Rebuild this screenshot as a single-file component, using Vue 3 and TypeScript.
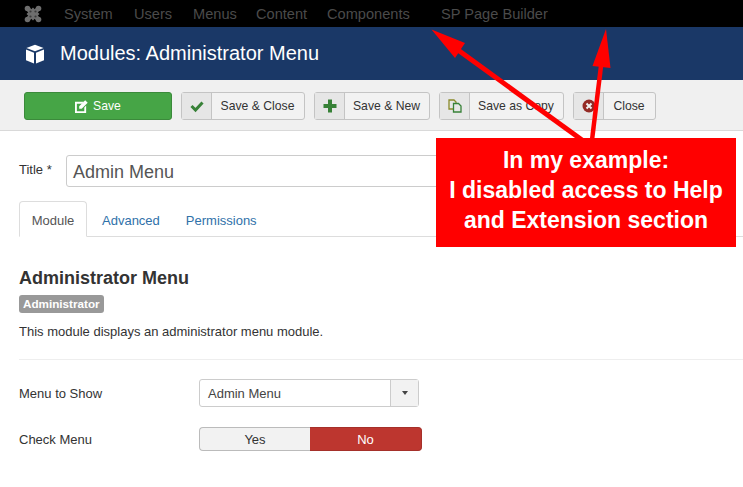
<template>
  <div class="page">
    <nav class="topnav">
      <svg class="joomla" viewBox="0 0 18 18" width="18" height="18">
        <g fill="#6e6e6e">
          <circle cx="3.500" cy="3.500" r="2.800" />
          <circle cx="14.500" cy="3.500" r="2.800" />
          <circle cx="3.500" cy="14.500" r="2.800" />
          <circle cx="14.500" cy="14.500" r="2.800" />
          <path d="M9 2.500 15.500 9 9 15.500 2.500 9Z" />
        </g>
        <path fill="none" stroke="#6e6e6e" stroke-width="4.500" d="M3.500 3.500 14.500 14.500M14.500 3.500 3.500 14.500" />
        <g fill="#3a3a3a">
          <circle cx="6.500" cy="6.500" r="1.100" />
          <circle cx="11.500" cy="6.500" r="1.100" />
          <circle cx="6.500" cy="11.500" r="1.100" />
          <circle cx="11.500" cy="11.500" r="1.100" />
        </g>
      </svg>
      <a v-for="item in menu" :key="item.label" class="navlink" :style="{ width: item.width + 'px' }">{{ item.label }}</a>
    </nav>

    <header class="titlebar">
      <svg class="cube" viewBox="0 0 20 20" width="20" height="20">
        <path fill="#fff" d="M10 .8 18.600 4 10 7.300 1.400 4Z" />
        <path fill="#fff" d="M1 5.600 9 8.700V19.400L1 16.300Z" />
        <path fill="#fff" d="M19 5.600 11 8.700V19.400L19 16.300Z" />
      </svg>
      <h1>Modules: Administrator Menu</h1>
    </header>

    <div class="toolbar">
      <button class="btn-save">
        <svg viewBox="0 0 14 14" width="13" height="13">
          <path fill="#fff" d="M0 2h9.500L7.500 4H2v8h8V8l2-2v8H0Z" />
          <path fill="#fff" d="M4.500 6.800 11 .3l2.700 2.700-6.500 6.500H4.500Z" />
        </svg>
        Save
      </button>
      <button v-for="b in buttons" :key="b.label" class="btn" :style="{ width: b.width + 'px' }">
        <span class="btn-icon">
          <svg v-if="b.icon === 'check'" viewBox="0 0 14 14" width="14" height="14">
            <path fill="none" stroke="#378137" stroke-width="3" d="M1.500 7 5.500 11 12.500 3.500" />
          </svg>
          <svg v-else-if="b.icon === 'plus'" viewBox="0 0 14 14" width="14" height="14">
            <path fill="#378137" d="M5 .5h4V5h4.500v4H9v4.500H5V9H.5V5H5Z" />
          </svg>
          <svg v-else-if="b.icon === 'copy'" viewBox="0 0 14 14" width="14" height="14">
            <path fill="none" stroke="#8a8a2a" stroke-width="1.300" d="M1 1h5l2 2v7H1Z" />
            <path fill="#e6e6e6" stroke="#378137" stroke-width="1.300" d="M5.500 4.500h5l2.500 2.500v6H5.500Z" />
          </svg>
          <svg v-else viewBox="0 0 14 14" width="14" height="14">
            <circle cx="7" cy="7" r="6.500" fill="#942a25" />
            <path stroke="#f0f0f0" stroke-width="2" d="M4.500 4.500 9.500 9.500M9.500 4.500 4.500 9.500" />
          </svg>
        </span>
        <span class="btn-label">{{ b.label }}</span>
      </button>
    </div>

    <main class="content">
      <div class="title-row">
        <label>Title *</label>
        <div class="title-input">Admin Menu</div>
      </div>

      <div class="tabs">
        <a class="tab active">Module</a>
        <a class="tab">Advanced</a>
        <a class="tab">Permissions</a>
      </div>

      <h2>Administrator Menu</h2>
      <span class="badge">Administrator</span>
      <p class="desc">This module displays an administrator menu module.</p>
      <hr />

      <div class="field first">
        <label>Menu to Show</label>
        <div class="select">
          <span class="select-value">Admin Menu</span>
          <span class="select-caret"><i></i></span>
        </div>
      </div>
      <div class="field">
        <label>Check Menu</label>
        <div class="switcher">
          <span class="yes">Yes</span>
          <span class="no">No</span>
        </div>
      </div>
    </main>

    <svg class="arrows" viewBox="0 0 743 487" width="743" height="487">
      <g fill="#f00" stroke="#f00">
        <path stroke-width="5" d="M458 50 582 140" />
        <path stroke-width="4.500" d="M601 66 592 140" />
        <path stroke="none" d="M431.500 29.500 465 43 455 58Z" />
        <path stroke="none" d="M606 29 610.500 68 592.500 66Z" />
      </g>
    </svg>
    <div class="callout">
      In my example:<br />
      I disabled access to Help<br />
      and Extension section
    </div>
  </div>
</template>

<script setup lang="ts">
const menu = [
  { label: 'System', width: 70 },
  { label: 'Users', width: 59 },
  { label: 'Menus', width: 63 },
  { label: 'Content', width: 71 },
  { label: 'Components', width: 114 },
  { label: 'SP Page Builder', width: 120 }
]

const buttons = [
  { label: 'Save & Close', icon: 'check', width: 124 },
  { label: 'Save & New', icon: 'plus', width: 116 },
  { label: 'Save as Copy', icon: 'copy', width: 125 },
  { label: 'Close', icon: 'close', width: 83 }
]
</script>

<style>
html,
body {
  margin: 0;
  background: #fff;
}
</style>

<style scoped>
.page {
  position: relative;
  width: 743px;
  height: 487px;
  overflow: hidden;
  font-family: "Liberation Sans", Arial, sans-serif;
  font-size: 13px;
  color: #333;
  background: #fff;
}

.topnav {
  display: flex;
  align-items: center;
  height: 27px;
  padding-left: 24px;
  background: #000;
}

.joomla {
  margin-right: 22px;
}

.navlink {
  font-size: 14.600px;
  color: #4b4b4b;
  white-space: nowrap;
}

.titlebar {
  display: flex;
  align-items: center;
  gap: 15px;
  height: 53px;
  padding-left: 25px;
  background: #1a3867;
}

.titlebar h1 {
  margin: 0;
  font-size: 20px;
  font-weight: 400;
  color: #fff;
}

.toolbar {
  display: flex;
  gap: 9px;
  height: 51px;
  padding: 12px 0 0 24px;
  box-sizing: border-box;
  background: #f0f0f0;
  border-bottom: 1px solid #d9d9d9;
}

.toolbar button {
  height: 28px;
  padding: 0;
  font-family: inherit;
  font-size: 12.200px;
  border-radius: 3px;
  box-sizing: border-box;
}

.btn-save {
  display: flex;
  align-items: center;
  justify-content: center;
  gap: 5px;
  width: 148px;
  color: #fff;
  background: #46a546;
  border: 1px solid #3b8a3b;
}

.btn {
  display: flex;
  align-items: stretch;
  color: #333;
  background: #f2f2f2;
  border: 1px solid #c4c4c4;
}

.btn-icon {
  display: flex;
  align-items: center;
  justify-content: center;
  width: 29px;
  flex: none;
  background: #e6e6e6;
  border-right: 1px solid #c4c4c4;
}

.btn-label {
  flex: 1;
  align-self: center;
  padding-right: 1px;
  text-align: center;
}

.content {
  padding: 24px 0 0 19px;
}

.title-row {
  display: flex;
}

.title-row label {
  width: 47px;
  padding-top: 7px;
}

.title-input {
  width: 640px;
  height: 32px;
  box-sizing: border-box;
  padding-left: 6px;
  font-size: 18px;
  line-height: 32px;
  color: #555;
  border: 1px solid #ccc;
  border-radius: 3px;
}

.tabs {
  display: flex;
  height: 36px;
  margin-top: 14px;
  box-sizing: border-box;
  border-bottom: 1px solid #ddd;
}

.tab {
  height: 36px;
  box-sizing: border-box;
  padding: 0 10px 0 14px;
  line-height: 37px;
  color: #3071a9;
  border: 1px solid transparent;
}

.tab.active {
  width: 68px;
  padding: 0;
  text-align: center;
  color: #555;
  background: #fff;
  border-color: #ddd #ddd #fff;
  border-radius: 4px 4px 0 0;
}

h2 {
  margin: 31px 0 0;
  font-size: 18px;
  line-height: 20px;
  color: #333;
}

.badge {
  display: inline-block;
  margin-top: 7px;
  padding: 0 4px;
  height: 18px;
  line-height: 18px;
  font-size: 11.700px;
  font-weight: 700;
  color: #fff;
  background: #999;
  border-radius: 3px;
}

.desc {
  margin: 10px 0 0;
  line-height: 18px;
}

hr {
  height: 1px;
  margin: 18px 0 0 0;
  border: 0;
  background: #eee;
}

.field {
  display: flex;
  align-items: center;
  margin-top: 20px;
}

.field.first {
  margin-top: 19px;
}

.field label {
  width: 180px;
}

.select {
  display: flex;
  width: 220px;
  height: 28px;
  box-sizing: border-box;
  border: 1px solid #ccc;
  border-radius: 3px;
}

.select-value {
  flex: 1;
  padding-left: 8px;
  line-height: 27px;
  color: #444;
}

.select-caret {
  display: flex;
  align-items: center;
  justify-content: center;
  width: 27px;
  background: #f2f2f2;
  border-left: 1px solid #ccc;
}

.select-caret i {
  width: 0;
  height: 0;
  border: 3.500px solid transparent;
  border-top: 4px solid #444;
  border-bottom: 0;
}

.switcher {
  display: flex;
  width: 223px;
  height: 24px;
  line-height: 23px;
  text-align: center;
  box-sizing: border-box;
}

.yes {
  width: 110px;
  background: #f2f2f2;
  border: 1px solid #bbb;
  border-right: 0;
  border-radius: 4px 0 0 4px;
}

.no {
  flex: 1;
  color: #fff;
  background: #bd362f;
  border: 1px solid #a5302a;
  border-left: 0;
  border-radius: 0 4px 4px 0;
}

.arrows {
  position: absolute;
  top: 0;
  left: 0;
}

.callout {
  position: absolute;
  left: 436px;
  top: 138px;
  width: 300px;
  height: 109px;
  box-sizing: border-box;
  padding-top: 7px;
  font-size: 23px;
  font-weight: 700;
  line-height: 30px;
  text-align: center;
  color: #fff;
  background: #f00;
}
</style>
